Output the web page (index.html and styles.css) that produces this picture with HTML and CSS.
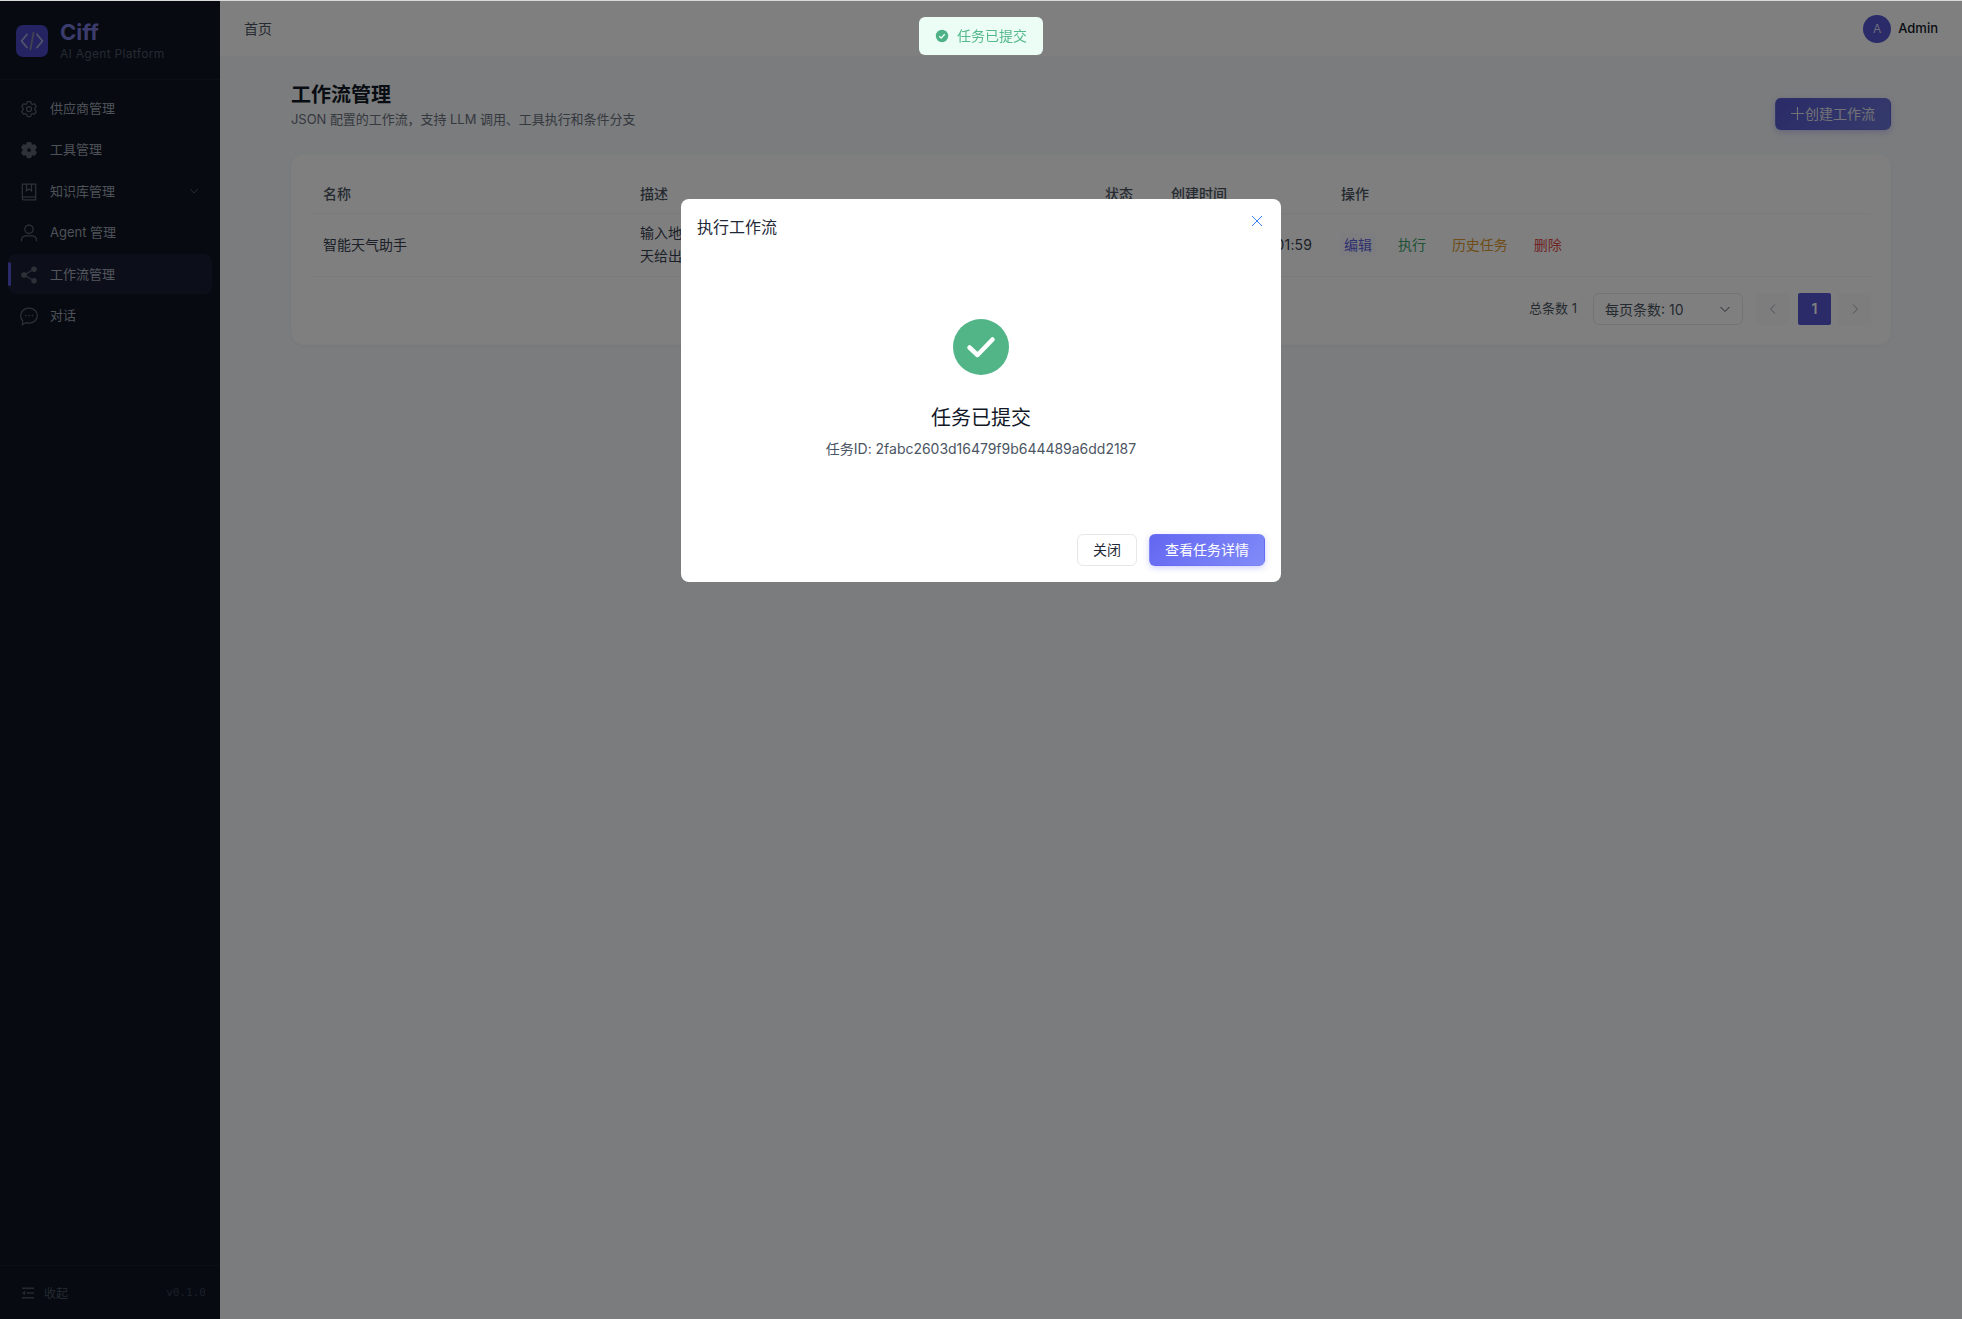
FILE: index.html
```html
<!DOCTYPE html>
<html lang="zh-CN">
<head>
    <meta charset="utf-8">
    <title>Ciff - AI Agent Platform</title>
    <link rel="stylesheet" href="styles.css">
</head>
<body>
    <div class="app">
        <aside class="sidebar">
            <div class="brand">
                <div class="brand_logo">
                    <svg width="24" height="24" viewBox="0 0 24 24" fill="none" stroke="#a9abd0" stroke-width="1.7" stroke-linecap="round" stroke-linejoin="round"><path d="M7 5.5 1.5 12 7 18.500"/><path d="M17 5.500 22.500 12 17 18.500"/><path d="M13.500 3.500 10.500 20.500" stroke="#85879f"/></svg>
                </div>
                <div>
                    <div class="brand_name">Ciff</div>
                    <div class="brand_sub">AI Agent Platform</div>
                </div>
            </div>
            <nav class="nav">
                <div class="nav_item">
                    <svg class="nav_icon" viewBox="0 0 24 24" fill="none" stroke="currentColor" stroke-width="1.5"><path d="M9.594 3.94c.09-.542.56-.94 1.11-.94h2.593c.55 0 1.02.398 1.11.94l.213 1.281c.063.374.313.686.645.87.074.04.147.083.22.127.325.196.72.257 1.075.124l1.217-.456a1.125 1.125 0 0 1 1.37.49l1.296 2.247a1.125 1.125 0 0 1-.26 1.431l-1.003.827c-.293.241-.438.613-.43.992a7.723 7.723 0 0 1 0 .255c-.008.378.137.75.43.991l1.004.827c.424.35.534.955.26 1.43l-1.298 2.247a1.125 1.125 0 0 1-1.369.491l-1.217-.456c-.355-.133-.75-.072-1.076.124a6.47 6.47 0 0 1-.22.128c-.331.183-.581.495-.644.869l-.213 1.281c-.09.543-.56.94-1.11.94h-2.594c-.55 0-1.019-.398-1.11-.94l-.213-1.281c-.062-.374-.312-.686-.644-.87a6.52 6.52 0 0 1-.22-.127c-.325-.196-.72-.257-1.076-.124l-1.217.456a1.125 1.125 0 0 1-1.369-.49l-1.297-2.247a1.125 1.125 0 0 1 .26-1.431l1.004-.827c.292-.24.437-.613.43-.991a6.932 6.932 0 0 1 0-.255c.007-.38-.138-.751-.43-.992l-1.004-.827a1.125 1.125 0 0 1-.26-1.43l1.297-2.247a1.125 1.125 0 0 1 1.37-.491l1.216.456c.356.133.751.072 1.076-.124.072-.044.146-.086.22-.128.332-.183.582-.495.644-.869l.214-1.28Z"/><circle cx="12" cy="12" r="3"/></svg>
                    <span>供应商管理</span>
                </div>
                <div class="nav_item">
                    <svg class="nav_icon" viewBox="0 0 24 24" fill="currentColor"><path fill-rule="evenodd" d="M9.594 3.94c.09-.542.56-.94 1.11-.94h2.593c.55 0 1.02.398 1.11.94l.213 1.281c.063.374.313.686.645.87.074.04.147.083.22.127.325.196.72.257 1.075.124l1.217-.456a1.125 1.125 0 0 1 1.37.49l1.296 2.247a1.125 1.125 0 0 1-.26 1.431l-1.003.827c-.293.241-.438.613-.43.992a7.723 7.723 0 0 1 0 .255c-.008.378.137.75.43.991l1.004.827c.424.35.534.955.26 1.43l-1.298 2.247a1.125 1.125 0 0 1-1.369.491l-1.217-.456c-.355-.133-.75-.072-1.076.124a6.47 6.47 0 0 1-.22.128c-.331.183-.581.495-.644.869l-.213 1.281c-.09.543-.56.94-1.11.94h-2.594c-.55 0-1.019-.398-1.11-.94l-.213-1.281c-.062-.374-.312-.686-.644-.87a6.52 6.52 0 0 1-.22-.127c-.325-.196-.72-.257-1.076-.124l-1.217.456a1.125 1.125 0 0 1-1.369-.49l-1.297-2.247a1.125 1.125 0 0 1 .26-1.431l1.004-.827c.292-.24.437-.613.43-.991a6.932 6.932 0 0 1 0-.255c.007-.38-.138-.751-.43-.992l-1.004-.827a1.125 1.125 0 0 1-.26-1.43l1.297-2.247a1.125 1.125 0 0 1 1.37-.491l1.216.456c.356.133.751.072 1.076-.124.072-.044.146-.086.22-.128.332-.183.582-.495.644-.869l.214-1.28ZM12 9a3 3 0 1 0 0 6 3 3 0 0 0 0-6Z" stroke="currentColor" stroke-width="1.5"/></svg>
                    <span>工具管理</span>
                </div>
                <div class="nav_item">
                    <svg class="nav_icon" viewBox="0 0 24 24" fill="none" stroke="currentColor" stroke-width="1.5"><path d="M4 2.500h16v19H6a2 2 0 0 1-2-2z"/><path d="M4 18h16"/><path d="M9 2.500v8l3-2 3 2v-8"/></svg>
                    <span>知识库管理</span>
                    <svg class="nav_arrow" viewBox="0 0 12 12" fill="none" stroke="currentColor" stroke-width="1"><path d="M2 4l4 4 4-4"/></svg>
                </div>
                <div class="nav_item">
                    <svg class="nav_icon" viewBox="0 0 24 24" fill="none" stroke="currentColor" stroke-width="1.5"><circle cx="12" cy="7.500" r="5"/><path d="M3 22v-1.500c0-3 2.500-5 5.500-5h7c3 0 5.500 2 5.500 5V22"/></svg>
                    <span>Agent 管理</span>
                </div>
                <div class="nav_item active">
                    <svg class="nav_icon" viewBox="0 0 24 24" fill="currentColor" stroke="currentColor" stroke-width="1.5"><path d="M18 5 6 12l12 7" fill="none"/><circle cx="18" cy="5" r="2.600"/><circle cx="6" cy="12" r="2.600"/><circle cx="18" cy="19" r="2.600"/></svg>
                    <span>工作流管理</span>
                </div>
                <div class="nav_item">
                    <svg class="nav_icon" viewBox="0 0 24 24" fill="none" stroke="currentColor" stroke-width="1.5"><path d="M12 2.500c5.500 0 10 3.900 10 9s-4.500 9-10 9c-1.300 0-2.500-.2-3.600-.6L4 22.500l.6-4.400c-1.600-1.600-2.600-4-2.600-6.600 0-5.100 4.500-9 10-9z"/><path d="M8 11.500h.1M12 11.500h.1M16 11.500h.1" stroke-width="2" stroke-linecap="round"/></svg>
                    <span>对话</span>
                </div>
            </nav>
            <div class="side_footer">
                <div class="collapse">
                    <svg width="12" height="12" viewBox="0 0 12 12" fill="currentColor"><path d="M0 .5h12v1.600H0zM4.500 5.200H12v1.600H4.500zM0 9.900h12v1.600H0zM0 6l3-2.200v4.400z"/></svg>
                    <span>收起</span>
                </div>
                <span class="version">v0.1.0</span>
            </div>
        </aside>
        <div class="main">
            <header class="topbar">
                <span class="crumb">首页</span>
                <div class="user">
                    <div class="avatar">A</div>
                    <span class="user_name">Admin</span>
                </div>
            </header>
            <main class="content">
                <div class="page_head">
                    <div>
                        <h1 class="page_title">工作流管理</h1>
                        <p class="page_sub">JSON 配置的工作流，支持 LLM 调用、工具执行和条件分支</p>
                    </div>
                    <button class="btn btn_primary btn_create"><svg class="plus" width="13" height="13" viewBox="0 0 13 13" stroke="currentColor" stroke-width="1.100"><path d="M6.500 0v13M0 6.500h13"/></svg>创建工作流</button>
                </div>
                <section class="card">
                    <table class="table">
                        <colgroup>
                            <col class="col_name"><col class="col_desc"><col class="col_status"><col class="col_time"><col>
                        </colgroup>
                        <thead>
                            <tr><th>名称</th><th>描述</th><th>状态</th><th>创建时间</th><th>操作</th></tr>
                        </thead>
                        <tbody>
                            <tr>
                                <td>智能天气助手</td>
                                <td>输入地点，自动调用工具查询实时天气，并根据查询结果为今<br>天给出穿衣与出行建议</td>
                                <td><span class="tag">启用</span></td>
                                <td class="time">2025-06-18 10:01:59</td>
                                <td class="ops">
                                    <a class="op op_edit">编辑</a>
                                    <a class="op op_run">执行</a>
                                    <a class="op op_history">历史任务</a>
                                    <a class="op op_delete">删除</a>
                                </td>
                            </tr>
                        </tbody>
                    </table>
                    <div class="pager">
                        <span class="pager_total">总条数 1</span>
                        <div class="pager_select">
                            <span>每页条数: 10</span>
                            <svg width="12" height="12" viewBox="0 0 12 12" fill="none" stroke="currentColor"><path d="M1.500 4l4.500 4.500L10.500 4"/></svg>
                        </div>
                        <div class="pager_btn">
                            <svg width="12" height="12" viewBox="0 0 12 12" fill="none" stroke="currentColor"><path d="M8 1.500 3.500 6 8 10.500"/></svg>
                        </div>
                        <div class="pager_num">1</div>
                        <div class="pager_btn">
                            <svg width="12" height="12" viewBox="0 0 12 12" fill="none" stroke="currentColor"><path d="M4 1.500 8.500 6 4 10.500"/></svg>
                        </div>
                    </div>
                </section>
            </main>
        </div>
    </div>

    <div class="overlay">
        <div class="modal">
            <div class="modal_head">
                <span class="modal_title">执行工作流</span>
                <svg class="modal_close" width="12" height="12" viewBox="0 0 12 12" fill="none" stroke="#3b82f6" stroke-width="1"><path d="M1 1l10 10M11 1 1 11"/></svg>
            </div>
            <div class="modal_body">
                <svg width="56" height="56" viewBox="0 0 56 56"><circle cx="28" cy="28" r="28" fill="#52b587"/><path d="M16.500 28.500 24.500 36 39.500 20.500" fill="none" stroke="#fff" stroke-width="4.500" stroke-linecap="round" stroke-linejoin="round"/></svg>
                <div class="result_title">任务已提交</div>
                <div class="result_id">任务ID: 2fabc2603d16479f9b644489a6dd2187</div>
            </div>
            <div class="modal_foot">
                <button class="btn btn_plain">关闭</button>
                <button class="btn btn_primary">查看任务详情</button>
            </div>
        </div>
    </div>

    <div class="toast">
        <svg width="14" height="14" viewBox="0 0 14 14"><circle cx="7" cy="7" r="6.200" fill="#4fb286"/><path d="M4.200 7.200 6.200 9l3.600-3.800" fill="none" stroke="#ecfdf5" stroke-width="1.300"/></svg>
        <span class="toast_text">任务已提交</span>
    </div>
</body>
</html>
```

FILE: styles.css
```css
html {
    background: #d9d9d9;
}

body {
    margin: 0;
    padding-top: 1px;
    height: 1318px;
    overflow: hidden;
    font-family: Inter, "Noto Sans CJK SC", sans-serif;
    font-size: 14px;
    color: #1f2937;
}

.app {
    display: flex;
    height: 100%;
    background: #f6f8fb;
}

/* sidebar */

.sidebar {
    width: 220px;
    flex-shrink: 0;
    display: flex;
    flex-direction: column;
    background: #0e1422;
    color: #6b7280;
}

.brand {
    height: 79px;
    box-sizing: border-box;
    padding: 24px 16px 0;
    display: flex;
    gap: 12px;
    border-bottom: 1px solid #181e2c;
}

.brand_logo {
    width: 32px;
    height: 32px;
    border-radius: 7px;
    background: #4a47c4;
    display: flex;
    align-items: center;
    justify-content: center;
}

.brand_name {
    margin-top: -7px;
    font-size: 22px;
    line-height: 28px;
    font-weight: 700;
    color: #7678d8;
}

.brand_sub {
    font-size: 12px;
    line-height: 16px;
    letter-spacing: .3px;
    color: #4b5563;
}

.nav {
    flex: 1;
    padding: 8px;
    display: flex;
    flex-direction: column;
    gap: 1.6px;
}

.nav_item {
    position: relative;
    height: 40px;
    padding: 0 13px;
    display: flex;
    align-items: center;
    gap: 13px;
    border-radius: 8px;
    font-size: 13px;
    color: #9ca3af;
}

.nav_item span {
    margin-bottom: 2px;
}

.nav_item.active {
    background: #181c32;
    color: #a6acba;
}

.nav_item.active::before {
    content: "";
    position: absolute;
    left: 0;
    top: 8px;
    width: 3px;
    height: 24px;
    border-radius: 2px;
    background: #5557d0;
}

.nav_icon {
    width: 20px;
    height: 20px;
    margin: 1px -2px 0;
    color: #5c6370;
}

.nav_arrow {
    width: 12px;
    height: 12px;
    margin-left: auto;
    margin-right: -1px;
    color: #4b5563;
}

.side_footer {
    height: 53px;
    padding: 0 14px 0 22px;
    display: flex;
    align-items: center;
    justify-content: space-between;
    border-top: 1px solid #181e2c;
}

.collapse {
    display: flex;
    align-items: center;
    gap: 10px;
    font-size: 12px;
    color: #4b5563;
}

.version {
    font-family: "DejaVu Sans Mono", monospace;
    font-size: 11px;
    color: #374151;
}

/* top bar and page */

.main {
    flex: 1;
    min-width: 0;
}

.topbar {
    height: 55px;
    padding: 0 24px;
    display: flex;
    align-items: center;
    justify-content: space-between;
    background: #fff;
}

.crumb {
    margin-bottom: 2px;
    color: #4b5563;
}

.user {
    display: flex;
    align-items: center;
    gap: 7px;
}

.avatar {
    width: 28px;
    height: 28px;
    border-radius: 50%;
    background: #5557d0;
    color: #d5d6f8;
    font-size: 12px;
    line-height: 28px;
    text-align: center;
}

.user_name {
    margin-bottom: 1px;
    font-size: 13px;
    font-weight: 500;
    color: #111827;
}

.content {
    padding: 24px 71px 0 71px;
}

.page_head {
    display: flex;
    align-items: flex-end;
    justify-content: space-between;
    margin-bottom: 24px;
}

.page_title {
    margin: 1px 0 -1px;
    font-size: 20px;
    line-height: 28px;
    font-weight: 600;
    color: #111827;
}

.page_sub {
    margin: 0;
    font-size: 13px;
    line-height: 22px;
    letter-spacing: -.05px;
    color: #6b7280;
}

.btn {
    height: 32px;
    box-sizing: border-box;
    padding: 0 15px 2px;
    border-radius: 6px;
    border: 1px solid transparent;
    font-family: inherit;
    font-size: 14px;
}

.btn_primary {
    background: linear-gradient(135deg, #6366f1, #818cf8);
    color: #fff;
    box-shadow: 0 2px 6px rgba(99, 102, 241, .3);
}

.btn_create {
    background: linear-gradient(135deg, #5557d0, #6b75d8);
    color: #e5e5ee;
}

.plus {
    margin-right: 1px;
    vertical-align: -1px;
}

.btn_plain {
    background: #fff;
    border-color: #e5e7eb;
    color: #1f2937;
}

/* table card */

.card {
    padding: 20px 19px 19px 19px;
    border: 1px solid #fbfcfd;
    border-radius: 12px;
    background: #fff;
    box-shadow: 0 1px 3px rgba(0, 0, 0, .04);
}

.table {
    width: 100%;
    table-layout: fixed;
    border-collapse: collapse;
}

.col_name { width: 317px; }
.col_desc { width: 465px; }
.col_status { width: 66px; }
.col_time { width: 170px; }

.table th {
    height: 36px;
    padding: 0 12px 2px;
    text-align: left;
    font-weight: 500;
    color: #4b5563;
    border-bottom: 1px solid #f3f4f6;
}

.table td {
    height: 60px;
    padding: 0 12px 2px;
    line-height: 23px;
    color: #374151;
    border-bottom: 1px solid #f3f4f6;
    white-space: nowrap;
}

.table td.time {
    letter-spacing: .2px;
}

.table td.ops {
    padding-left: 11px;
}

.op {
    display: inline-block;
    padding: 0 4px;
    margin-right: 14px;
    border-radius: 3px;
}

.op_edit { color: #5e60dd; background: #fafaff; }
.op_run { color: #3fa66f; }
.op_history { color: #dd9a30; }
.op_delete { color: #df4a4a; }

.tag {
    color: #3fa66f;
}

.pager {
    margin-top: 16px;
    display: flex;
    align-items: center;
    justify-content: flex-end;
    gap: 8px;
    font-size: 13px;
    color: #4b5563;
}

.pager_total {
    margin: 0 8px 3px 0;
}

.pager_select {
    width: 150px;
    height: 32px;
    box-sizing: border-box;
    padding: 0 11px;
    margin-right: 5px;
    display: flex;
    align-items: center;
    justify-content: space-between;
    border: 1px solid #e5e7eb;
    border-radius: 6px;
    font-size: 14px;
}

.pager_btn {
    width: 33px;
    height: 32px;
    display: flex;
    align-items: center;
    justify-content: center;
    background: #fbfbfc;
    color: #9ca3af;
}

.pager_num {
    width: 33px;
    height: 32px;
    margin-left: 1px;
    margin-right: -1px;
    border-radius: 2px;
    background: #5557d0;
    color: #fff;
    font-size: 14px;
    font-weight: 600;
    line-height: 32px;
    text-align: center;
}

/* modal layer */

.overlay {
    position: fixed;
    inset: 1px 0 0 0;
    padding-top: 198px;
    display: flex;
    justify-content: center;
    align-items: flex-start;
    background: rgba(0, 0, 0, .5);
}

.modal {
    width: 600px;
    border-radius: 8px;
    background: #fff;
}

.modal_head {
    padding: 16px 16px 0;
    display: flex;
    justify-content: space-between;
    line-height: 24px;
}

.modal_title {
    font-size: 16px;
    color: #1f2937;
}

.modal_close {
    margin-right: 2px;
}

.modal_body {
    padding: 80px 0 74px;
    display: flex;
    flex-direction: column;
    align-items: center;
}

.result_title {
    margin-top: 29px;
    font-size: 20px;
    line-height: 28px;
    color: #111827;
}

.result_id {
    margin-top: 6px;
    line-height: 22px;
    letter-spacing: -.02px;
    color: #4b5563;
}

.modal_foot {
    padding: 0 16px 16px;
    display: flex;
    justify-content: flex-end;
    gap: 12px;
}

.toast {
    position: fixed;
    top: 17px;
    left: 919px;
    width: 124px;
    height: 38px;
    box-sizing: border-box;
    padding-left: 16px;
    display: flex;
    align-items: center;
    gap: 8px;
    border-radius: 6px;
    background: #ecfdf5;
    color: #55b98c;
}

.toast_text {
    margin-bottom: 2px;
}
```
